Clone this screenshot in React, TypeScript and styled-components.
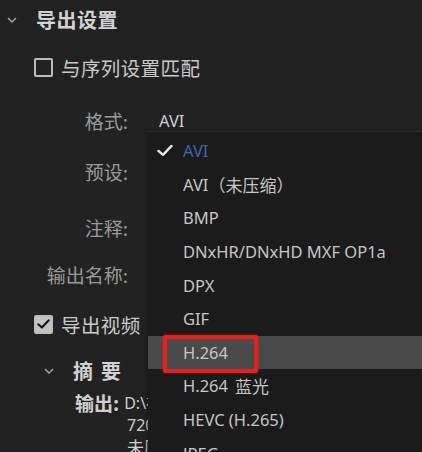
import React from "react";
import styled, { createGlobalStyle } from "styled-components";

const Global = createGlobalStyle`
  html, body { margin: 0; padding: 0; background: #222222; }
  body { width: 422px; height: 452px; overflow: hidden; }
  #root { position: relative; width: 422px; height: 452px; overflow: hidden; }
`;

const CJK = `"Noto Sans CJK SC", "Noto Sans", sans-serif`;
const LATIN = `"Noto Sans", "Noto Sans CJK SC", sans-serif`;

const Page = styled.div`
  position: relative;
  width: 422px;
  height: 452px;
  background: #222222;
  font-family: ${CJK};
  color: #cfcfcf;
`;

const Panel = styled.div`
  display: flex;
  flex-direction: column;
  padding-top: 5px;
`;

const HeaderRow = styled.div<{ $indent: number; $h: number }>`
  display: flex;
  align-items: center;
  height: ${(p) => p.$h}px;
  padding-left: ${(p) => p.$indent}px;
`;

const ChevronBox = styled.span<{ $w: number }>`
  display: inline-flex;
  width: ${(p) => p.$w}px;
  align-items: center;
`;

const Title = styled.span<{ $spacing?: number }>`
  font-size: 20px;
  font-weight: 700;
  color: #d2d2d2;
  letter-spacing: ${(p) => p.$spacing ?? 0.5}px;
  line-height: 1;
`;

const CheckRow = styled.div<{ $h: number }>`
  display: flex;
  align-items: center;
  gap: 8px;
  height: ${(p) => p.$h}px;
  padding-left: 34px;
  font-size: 19.5px;
  color: #c9c9c9;
  letter-spacing: 0.4px;
`;

const Box = styled.span<{ $checked?: boolean }>`
  width: 19px;
  height: 19px;
  box-sizing: border-box;
  border-radius: 2px;
  border: 2px solid #bcbcbc;
  background: ${(p) => (p.$checked ? "#c3c3c3" : "transparent")};
  display: inline-flex;
  align-items: center;
  justify-content: center;
  flex: none;
`;

const FormRow = styled.div<{ $h: number }>`
  display: grid;
  grid-template-columns: 128px 1fr;
  column-gap: 31px;
  align-items: center;
  height: ${(p) => p.$h}px;
`;

const Label = styled.span`
  text-align: right;
  font-size: 19px;
  color: #9a9a9a;
  white-space: nowrap;
`;

const Value = styled.span`
  font-family: ${LATIN};
  font-size: 16.5px;
  color: #cfcfcf;
  white-space: nowrap;
`;

const SummaryRow = styled.div<{ $h: number }>`
  display: flex;
  align-items: center;
  width: 148px;
  box-sizing: border-box;
  overflow: hidden;
  height: ${(p) => p.$h}px;
  line-height: 20px;
  padding-left: 75px;
  white-space: nowrap;
`;

const SummaryLabel = styled.span`
  font-size: 19px;
  font-weight: 700;
  color: #cfcfcf;
  margin-right: 5px;
  flex: none;
`;

const SummaryText = styled.span<{ $indent?: number }>`
  font-family: ${LATIN};
  font-size: 16px;
  color: #cfcfcf;
  padding-left: ${(p) => p.$indent ?? 0}px;
  flex: none;
`;

const Menu = styled.div`
  position: absolute;
  left: 148px;
  top: 131px;
  right: 0;
  bottom: 0;
  background: #1b1b1b;
  border-top: 1px solid #2c2c2c;
  padding-top: 2px;
  display: flex;
  flex-direction: column;
  overflow: hidden;
  box-shadow: -2px 0 4px rgba(0, 0, 0, 0.25);
`;

const Item = styled.div<{ $hover?: boolean; $selected?: boolean }>`
  position: relative;
  flex: none;
  height: 33.6px;
  display: flex;
  align-items: center;
  padding-left: 35px;
  background: ${(p) => (p.$hover ? "#4a4a4a" : "transparent")};
  font-family: ${LATIN};
  font-size: 16.5px;
  color: ${(p) => (p.$selected ? "#3f63b4" : "#c6c6c6")};
  white-space: nowrap;
`;

const CheckMark = styled.span`
  position: absolute;
  left: 9px;
  top: 50%;
  transform: translateY(-55%);
  display: inline-flex;
`;

const Cjk = styled.span<{ $gap?: number }>`
  font-family: ${CJK};
  font-size: 17px;
  margin-left: ${(p) => p.$gap ?? 0}px;
`;

const Annotation = styled.span`
  position: absolute;
  left: 15px;
  top: -1px;
  width: 95px;
  height: 38px;
  box-sizing: border-box;
  border: 4px solid #e5211d;
  border-radius: 2px;
  box-shadow: 0 0 3px rgba(229, 33, 29, 0.6);
  pointer-events: none;
`;

const Chevron = () => (
  <svg width="10" height="6" viewBox="0 0 10 6">
    <path d="M1 1 L5 5 L9 1" fill="none" stroke="#a8a8a8" strokeWidth="1.4" />
  </svg>
);

const Tick = ({ color, w }: { color: string; w: number }) => (
  <svg width={w} height={w * 0.75} viewBox="0 0 16 12">
    <path d="M1.5 6.5 L6 10.5 L14.5 1.5" fill="none" stroke={color} strokeWidth="2.4" strokeLinecap="round" strokeLinejoin="round" />
  </svg>
);

const formats: { name: React.ReactNode; key: string }[] = [
  { key: "avi", name: "AVI" },
  { key: "aviu", name: <>AVI<Cjk>（未压缩）</Cjk></> },
  { key: "bmp", name: "BMP" },
  { key: "dnx", name: "DNxHR/DNxHD MXF OP1a" },
  { key: "dpx", name: "DPX" },
  { key: "gif", name: "GIF" },
  { key: "h264", name: "H.264" },
  { key: "h264b", name: <>H.264<Cjk $gap={7}>蓝光</Cjk></> },
  { key: "hevc", name: "HEVC (H.265)" },
  { key: "jpeg", name: "JPEG" },
];

export default function App() {
  return (
    <Page>
      <Global />
      <Panel>
        <HeaderRow $indent={7} $h={29}>
          <ChevronBox $w={29}>
            <Chevron />
          </ChevronBox>
          <Title>导出设置</Title>
        </HeaderRow>
        <CheckRow $h={66}>
          <Box />
          <span>与序列设置匹配</span>
        </CheckRow>
        <FormRow $h={40}>
          <Label>格式:</Label>
          <Value>AVI</Value>
        </FormRow>
        <FormRow $h={63}>
          <Label>预设:</Label>
          <Value />
        </FormRow>
        <FormRow $h={48}>
          <Label>注释:</Label>
          <Value />
        </FormRow>
        <FormRow $h={46}>
          <Label>输出名称:</Label>
          <Value />
        </FormRow>
        <CheckRow $h={54}>
          <Box $checked>
            <Tick color="#111" w={13} />
          </Box>
          <span>导出视频</span>
        </CheckRow>
        <HeaderRow $indent={44} $h={40}>
          <ChevronBox $w={29}>
            <Chevron />
          </ChevronBox>
          <Title $spacing={8}>摘要</Title>
        </HeaderRow>
        <SummaryRow $h={23}>
          <SummaryLabel>输出:</SummaryLabel>
          <SummaryText>D:\视频\序列 01.avi</SummaryText>
        </SummaryRow>
        <SummaryRow $h={22}>
          <SummaryText $indent={52}>720x480 (0.9091), 29.97 fps</SummaryText>
        </SummaryRow>
        <SummaryRow $h={22}>
          <SummaryText $indent={52}><Cjk>未压缩</Cjk></SummaryText>
        </SummaryRow>
      </Panel>

      <Menu>
        {formats.map((f, i) => (
          <Item key={f.key} $selected={i === 0} $hover={f.key === "h264"}>
            {i === 0 && (
              <CheckMark>
                <Tick color="#e6e6e6" w={16} />
              </CheckMark>
            )}
            {f.name}
            {f.key === "h264" && <Annotation />}
          </Item>
        ))}
      </Menu>
    </Page>
  );
}
